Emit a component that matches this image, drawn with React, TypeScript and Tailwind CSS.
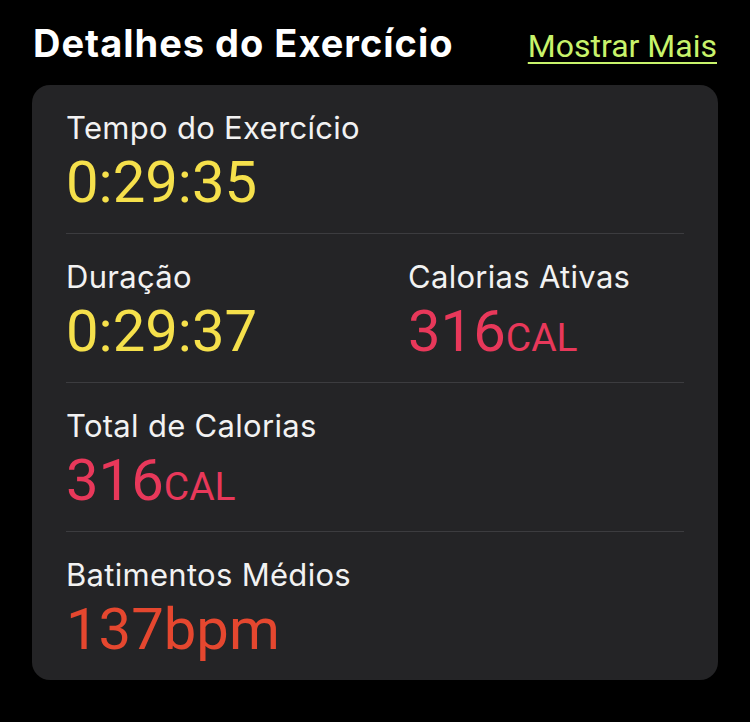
const roboto = { fontFamily: 'Roboto, "Noto Sans", sans-serif' }
const inter = { fontFamily: 'Inter, "Noto Sans", sans-serif' }

interface Stat {
  label: string
  value: string
  unit?: string
  color: string
}

function StatCell({ stat }: { stat: Stat }) {
  return (
    <div>
      <div className="text-[31px] leading-[36px] text-[#f2f2f2] tracking-[0.3px]" style={inter}>
        {stat.label}
      </div>
      <div className={`mt-[6px] h-[60px] text-[58px] leading-[60px] whitespace-nowrap ${stat.color}`}>
        {stat.value}
        {stat.unit && <span className="text-[39px] leading-none">{stat.unit}</span>}
      </div>
    </div>
  )
}

const rows: Stat[][] = [
  [{ label: 'Tempo do Exercício', value: '0:29:35', color: 'text-[#f5e04b]' }],
  [
    { label: 'Duração', value: '0:29:37', color: 'text-[#f5e04b]' },
    { label: 'Calorias Ativas', value: '316', unit: 'CAL', color: 'text-[#e8385a]' },
  ],
  [{ label: 'Total de Calorias', value: '316', unit: 'CAL', color: 'text-[#e8385a]' }],
  [{ label: 'Batimentos Médios', value: '137bpm', color: 'text-[#e5472f]' }],
]

export default function App() {
  return (
    <div className="w-[750px] h-[722px] bg-black overflow-hidden" style={roboto}>
      <div className="flex items-baseline justify-between px-[33px] pt-[21px]">
        <h2 className="text-[38px] leading-[44px] font-bold text-white tracking-[1px]" style={inter}>
          Detalhes do Exercício
        </h2>
        <a className="text-[32px] leading-[44px] text-[#c8f36b] underline decoration-2 underline-offset-[5px]">
          Mostrar Mais
        </a>
      </div>

      <div className="mx-[32px] mt-[17px] rounded-[18px] bg-[#242426] px-[34px]">
        {rows.map((row, i) => (
          <div
            key={i}
            className={`grid grid-cols-[342px_1fr] pt-[25px] pb-[21px] ${i < rows.length - 1 ? 'border-b border-[#3c3c3f]' : ''}`}
          >
            {row.map(s => (
              <StatCell key={s.label} stat={s} />
            ))}
          </div>
        ))}
      </div>
    </div>
  )
}
